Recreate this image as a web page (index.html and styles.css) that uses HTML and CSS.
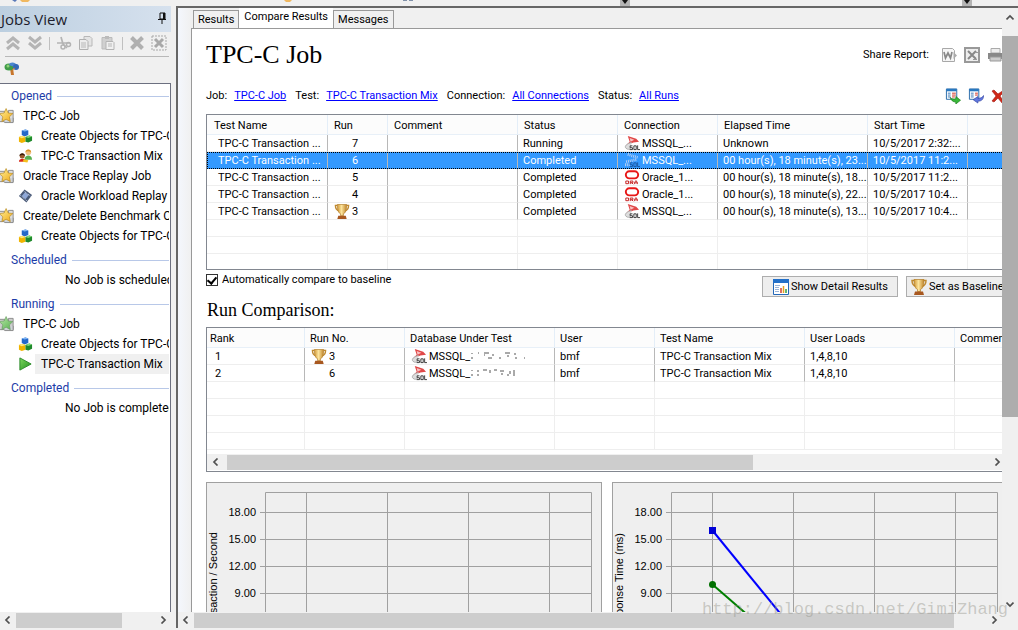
FILE: index.html
```html
<!DOCTYPE html>
<html lang="en">
<head>
<meta charset="utf-8">
<title>Jobs View</title>
<link rel="stylesheet" href="styles.css">
</head>
<body>
<svg class="defs" aria-hidden="true">
  <defs>
    <linearGradient id="gold" x1="0" y1="0" x2="1" y2="1"><stop offset="0" stop-color="#fff2a0"/><stop offset="1" stop-color="#f0a810"/></linearGradient>
    <linearGradient id="lime" x1="0" y1="0" x2="1" y2="1"><stop offset="0" stop-color="#b8e8a8"/><stop offset="1" stop-color="#58b050"/></linearGradient>
    <linearGradient id="play" x1="0" y1="0" x2="1" y2="1"><stop offset="0" stop-color="#7fd860"/><stop offset="1" stop-color="#1f8f1c"/></linearGradient>
    <linearGradient id="cup" x1="0" y1="0" x2="1" y2="0"><stop offset="0" stop-color="#d09838"/><stop offset=".45" stop-color="#fce49c"/><stop offset="1" stop-color="#c08428"/></linearGradient>
  </defs>
  <symbol id="i-star" viewBox="0 0 16 16"><path d="M-2 3h7v11h-7zM9 2h5v12H9z" fill="#ddd" stroke="#8a8a8a"/><path d="M2 11l3 4h9v-5" fill="#cfd3d8" stroke="#888"/><path d="M6.500 0l2.200 4.800 5 .6-3.700 3.500 1 5.100-4.500-2.600L2 14l1-5.100L-.7 5.400l5-.6z" fill="url(#gold)" stroke="#b98a20" stroke-width=".7"/></symbol>
  <symbol id="i-star-run" viewBox="0 0 16 16"><path d="M-2 3h7v11h-7zM9 2h5v12H9z" fill="#ccc" stroke="#8a8a8a"/><path d="M2 11l3 4h9v-5" fill="#cfd3d8" stroke="#888"/><path d="M6.500 0l2.200 4.800 5 .6-3.700 3.500 1 5.100-4.500-2.600L2 14l1-5.100L-.7 5.400l5-.6z" fill="url(#lime)" stroke="#6d9a68" stroke-width=".7"/></symbol>
  <symbol id="i-cubes" viewBox="0 0 16 16"><path d="M4 2l4-1 3 1v5L7 8.500 4 7z" fill="#2468c8"/><path d="M4 2l4-1 3 1-4 1.200z" fill="#7db4f4"/><path d="M1 9l3-1 4 1v5l-4 1.500L1 14z" fill="#f0b400"/><path d="M1 9l3-1 4 1-4 1.300z" fill="#ffe878"/><path d="M8 9l4-1.500 3 1V13l-4 2-3-1z" fill="#1f8a2c"/><path d="M8 9l4-1.500 3 1-4 1.500z" fill="#7fd87a"/></symbol>
  <symbol id="i-users" viewBox="0 0 16 16"><circle cx="11" cy="4" r="3" fill="#f0c080"/><path d="M8 4c0-4 6-4 6 0-2-1-4-2-6 0z" fill="#d89020"/><path d="M7 12c0-6 8-6 8 0z" fill="#58b050"/><circle cx="4.500" cy="8" r="2.700" fill="#9a5c2c"/><path d="M1.500 8c0-4 6-4 6 0-2-2-4-1-6 0z" fill="#3a1c08"/><path d="M1 14c0-4 7-4 8 0z" fill="#d82818"/><path d="M6 11.500l5 1-1 2.500-5-1z" fill="#f4c020"/></symbol>
  <symbol id="i-film" viewBox="0 0 16 16"><path d="M7 1l8 6-6 8-8-7z" fill="#4a5a78"/><path d="M7.500 4l4 3-3.500 4.500-4-3.500z" fill="#8fa8d8"/><path d="M6 2.500l7.500 5.800M2.500 7.200l7 6" stroke="#dde4f0" stroke-dasharray="1 1"/></symbol>
  <symbol id="i-play" viewBox="0 0 16 16"><path d="M2 1.500l12 6.500-12 6.500z" fill="url(#play)" stroke="#2a8a28"/></symbol>
  <symbol id="i-tree" viewBox="0 0 16 16"><path d="M6 7h3l1 7H7z" fill="#c8762c"/><ellipse cx="5" cy="6" rx="4.500" ry="3.500" fill="#3f9c48"/><circle cx="4" cy="5" r="1.500" fill="#8fd078"/><path d="M5 4c1-4 7-3 10 2-3-1-7 0-10-2z" fill="#4a86d0"/><circle cx="12" cy="6" r="3" fill="#3468b8"/><path d="M8 9l3-2" stroke="#c8762c"/></symbol>
  <symbol id="i-up" viewBox="0 0 16 16"><path d="M2 8l6-5 6 5M2 14l6-5 6 5" fill="none" stroke="#b4b4b4" stroke-width="3"/></symbol>
  <symbol id="i-down" viewBox="0 0 16 16"><path d="M2 2l6 5 6-5M2 8l6 5 6-5" fill="none" stroke="#b4b4b4" stroke-width="3"/></symbol>
  <symbol id="i-cut" viewBox="0 0 16 16"><path d="M5 2l2 7M1 8h13M7 9l4 4" stroke="#b4b4b4" stroke-width="1.700"/><circle cx="7" cy="12" r="2" fill="none" stroke="#b4b4b4" stroke-width="1.500"/><circle cx="12.500" cy="9.500" r="2" fill="none" stroke="#b4b4b4" stroke-width="1.500"/></symbol>
  <symbol id="i-copy" viewBox="0 0 16 16"><path d="M6 1.500h6l2 2V11H6z" fill="#e4e4e4" stroke="#b8b8b8"/><path d="M1.500 4.500H8l2 2v8H1.500z" fill="#ececec" stroke="#b0b0b0"/><path d="M3 8h5M3 10h5M3 12h5" stroke="#b8b8b8"/></symbol>
  <symbol id="i-paste" viewBox="0 0 16 16"><path d="M2 2.500h10V14H2z" fill="#d0d0d0" stroke="#bbb"/><path d="M5 1h4v3H5z" fill="#bbb"/><path d="M6 6.500h7l1 1v7H6z" fill="#f0f0f0" stroke="#b4b4b4"/><path d="M8 9h4M8 11h4" stroke="#b8b8b8"/></symbol>
  <symbol id="i-x" viewBox="0 0 16 16"><path d="M2.500 2.500l11 11M13.500 2.500l-11 11" stroke="#b0b0b0" stroke-width="4"/></symbol>
  <symbol id="i-xbox" viewBox="0 0 16 16"><rect x="1" y="1" width="14" height="14" fill="none" stroke="#a8a8a8" stroke-dasharray="2 1"/><path d="M4 4l8 8M12 4l-8 8" stroke="#a8a8a8" stroke-width="3"/></symbol>
  <symbol id="i-pin" viewBox="0 0 10 12"><path d="M3 1h5v6H3zM1 7.500h8M5 8v4" fill="none" stroke="#111"/><path d="M6 1h2v6H6z" fill="#111"/></symbol>
  <symbol id="i-cup" viewBox="0 0 16 16"><path d="M3 1.500H1c0 3 1 5 4 6M13 1.500h2c0 3-1 5-4 6" fill="none" stroke="#c08a30" stroke-width="1.500"/><path d="M3 .5h10c0 5-1 9-3.500 10v2h-3v-2C4 9.500 3 5.500 3 .5z" fill="url(#cup)" stroke="#b07820" stroke-width=".7"/><path d="M4 12.500h8l1 3.500H3z" fill="#a85820"/></symbol>
  <symbol id="i-sql" viewBox="0 0 17 16"><path d="M4 0l9 3 3 3-6 1-8 3 4-4z" fill="#e04848"/><path d="M6 2l5 2-4 2z" fill="#f8c0c0"/><path d="M8 7c-5 1-8 4-6 6s4 1 5 0" fill="#ddd" stroke="#aaa"/><path d="M9 10.500H6.500v2H9v2H6M10.500 10.500h2.500v4h-2.500zM14.500 10v4.500H17" fill="none" stroke="#333"/></symbol>
  <symbol id="i-sql-sel" viewBox="0 0 17 16"><path d="M4 1.500l11 3.500M13 7L2 9.500M1 12.500h6" fill="none" stroke="#b8d0f4" stroke-width="3" stroke-dasharray="1 1"/><path d="M9 10.500H6.500v2H9v2H6M10.500 10.500h2.500v4h-2.500zM14.500 10v4.500H17" fill="none" stroke="#1b56a0"/></symbol>
  <symbol id="i-ora" viewBox="0 0 17 17"><rect x="1.500" y="1.500" width="14" height="8" rx="4" fill="#fff" stroke="#e81818" stroke-width="2.200"/><path d="M1.500 12.500h3v3h-3zM6.500 16v-3.500h3v2h-3M8 14.500l2 1.500M11.500 16v-2l1.500-2 1.500 2v2M11.500 14.500h3" fill="none" stroke="#c01010"/></symbol>
  <symbol id="i-word" viewBox="0 0 16 16"><path d="M1.500 1.500h10l2 2v11h-12z" fill="#f6f6f6" stroke="#a8a8a8"/><path d="M3 5l1.500 6L7 6l2.500 5L11 5" fill="none" stroke="#888" stroke-width="1.700"/><path d="M12.500 5l3.500 3.500-3.500 3.500z" fill="#aaa"/></symbol>
  <symbol id="i-excel" viewBox="0 0 16 16"><path d="M1 1h14v14H1z" fill="#eee" stroke="#999" stroke-width="2"/><path d="M4 4l8 8M12 4l-8 8" stroke="#888" stroke-width="2"/><path d="M9 12.500h4M11 5.500h3" stroke="#999"/></symbol>
  <symbol id="i-print" viewBox="0 0 16 16"><path d="M4 1.500h9V6H4z" fill="#eee" stroke="#aaa"/><path d="M1 6h15v6H1z" fill="#888"/><path d="M3 10h11v4H3z" fill="#ccc" stroke="#999"/></symbol>
  <symbol id="i-sheet-out" viewBox="0 0 16 17"><path d="M1 1h11v11H1z" fill="#fff" stroke="#2468a8"/><path d="M1 1h11v2.500H1z" fill="#2878c0"/><path d="M2.500 5.500h3M2.500 7.500h3M2.500 9.500h3" stroke="#3878b8"/><path d="M7 5.500h4M7 7.500h4M7 9.500h3" stroke="#d03020"/><path d="M5 10c2 2 4 2 6 1.500V9l5 4-5 4v-2c-3 0-5-2-6-5z" fill="#38b838" stroke="#187818" stroke-width=".7"/></symbol>
  <symbol id="i-sheet-in" viewBox="0 0 16 17"><path d="M1 1h10v11H1z" fill="#fff" stroke="#2468a8"/><path d="M1 1h10v2.500H1z" fill="#2878c0"/><path d="M2.500 5.500h3M2.500 7.500h3M2.500 9.500h3" stroke="#3878b8"/><path d="M7 5.500h3M7 7.500h3" stroke="#d03020"/><path d="M16 8c0 5-3 6-6 6v2l-5-3.500 5-3.500v2c3 0 5-1 6-3z" fill="#6078e0" stroke="#3040a0" stroke-width=".7"/></symbol>
  <symbol id="i-del" viewBox="0 0 16 16"><path d="M3 2l4 4 6-4 1 1-5 5 4 6-2 1-4-5-4 4-2-1 4-5-4-5z" fill="#d02818" stroke="#a01810" stroke-width=".6"/></symbol>
  <symbol id="i-report" viewBox="0 0 16 16"><path d="M.5.5h15v15H.5z" fill="#fff" stroke="#2468b8"/><path d="M0 0h16v4H0z" fill="#2470c8"/><path d="M2 6.500h5M2 8.500h4M2 10.500h4M2 12.500h4" stroke="#9ab4d8"/><path d="M8 9v5" stroke="#d04030" stroke-width="1.500"/><path d="M10.500 7v7" stroke="#e8a020" stroke-width="1.500"/><path d="M13 10v4" stroke="#30a040" stroke-width="1.500"/></symbol>
  <symbol id="a-left" viewBox="0 0 8 8"><path d="M5.500.5L2 4l3.500 3.500" fill="none" stroke="#505050" stroke-width="1.700"/></symbol>
  <symbol id="a-right" viewBox="0 0 8 8"><path d="M2.500.5L6 4 2.500 7.500" fill="none" stroke="#505050" stroke-width="1.700"/></symbol>
  <symbol id="a-up" viewBox="0 0 8 8"><path d="M.5 5.500L4 2l3.500 3.500" fill="none" stroke="#505050" stroke-width="1.700"/></symbol>
  <symbol id="a-down" viewBox="0 0 8 8"><path d="M.5 2.500L4 6l3.500-3.500" fill="none" stroke="#505050" stroke-width="1.700"/></symbol>
  <symbol id="grid" viewBox="0 0 396 200">
    <path d="M59.500 200V10.500h326V200M100.500 10.500V200M181.500 10.500V200M262.500 10.500V200M343.500 10.500V200M54 30.500h331M54 57.500h331M54 84.500h331M54 111.500h331M54 138.500h331" fill="none" stroke="#a0a0a0"/>
  </symbol>
</svg>

<div class="strip">
  <svg viewBox="0 0 420 6" width="420" height="6" aria-hidden="true"><path d="M12 0h5l-2 2z" fill="#5878b8"/><path d="M20 0h10l-2 2h-6z" fill="#f0b860"/><path d="M284 0h8l-2 2h-4z" fill="#f0b860"/><path d="M403 0h4v1h-4zM409 0h4v1h-4z" fill="#8090a8"/></svg>
  <svg class="drop drop-mid" viewBox="0 0 10 6" aria-hidden="true"><path d="M0 0h10v6H0z" fill="#b4b4b4"/><path d="M2 0h6L5 4z" fill="#111"/></svg>
  <svg class="drop drop-end" viewBox="0 0 10 6" aria-hidden="true"><path d="M0 0h10v6H0z" fill="#b4b4b4"/><path d="M2 0h6L5 4z" fill="#111"/></svg>
</div>

<div class="window">
  <aside class="sidebar">
    <header class="side-title"><h2>Jobs View</h2><svg width="10" height="12"><use href="#i-pin"/></svg></header>
    <div class="toolbar">
      <button aria-label="Collapse"><svg><use href="#i-up"/></svg></button>
      <button aria-label="Expand"><svg><use href="#i-down"/></svg></button>
      <i></i>
      <button aria-label="Cut"><svg><use href="#i-cut"/></svg></button>
      <button aria-label="Copy"><svg><use href="#i-copy"/></svg></button>
      <button aria-label="Paste"><svg><use href="#i-paste"/></svg></button>
      <i></i>
      <button aria-label="Delete"><svg><use href="#i-x"/></svg></button>
      <button aria-label="Delete all"><svg><use href="#i-xbox"/></svg></button>
    </div>
    <div class="toolbar second"><button aria-label="Tree"><svg><use href="#i-tree"/></svg></button></div>
    <div class="tree">
      <h3>Opened</h3>
      <ul>
        <li><svg><use href="#i-star"/></svg><span>TPC-C Job</span></li>
        <li class="sub"><svg><use href="#i-cubes"/></svg><span>Create Objects for TPC-C</span></li>
        <li class="sub"><svg><use href="#i-users"/></svg><span>TPC-C Transaction Mix</span></li>
        <li><svg><use href="#i-star"/></svg><span>Oracle Trace Replay Job</span></li>
        <li class="sub"><svg><use href="#i-film"/></svg><span>Oracle Workload Replay</span></li>
        <li><svg><use href="#i-star"/></svg><span>Create/Delete Benchmark O</span></li>
        <li class="sub"><svg><use href="#i-cubes"/></svg><span>Create Objects for TPC-C</span></li>
      </ul>
      <h3>Scheduled</h3>
      <p>No Job is scheduled</p>
      <h3>Running</h3>
      <ul>
        <li><svg><use href="#i-star-run"/></svg><span>TPC-C Job</span></li>
        <li class="sub"><svg><use href="#i-cubes"/></svg><span>Create Objects for TPC-C</span></li>
        <li class="sub active"><svg><use href="#i-play"/></svg><span>TPC-C Transaction Mix</span></li>
      </ul>
      <h3>Completed</h3>
      <p>No Job is completed</p>
    </div>
    <div class="hbar"><svg><use href="#a-left"/></svg><div class="track"><b class="thumb-side"></b></div><svg><use href="#a-right"/></svg></div>
  </aside>

  <main class="pane">
    <div class="view">
      <nav class="tabs">
        <button>Results</button><button class="current">Compare Results</button><button>Messages</button>
      </nav>
      <div class="page">
        <div class="report">
          <header class="report-head">
            <h1>TPC-C Job</h1>
            <div class="share"><span>Share Report:</span>
              <button aria-label="Word"><svg><use href="#i-word"/></svg></button>
              <button aria-label="Excel"><svg><use href="#i-excel"/></svg></button>
              <button aria-label="Print"><svg><use href="#i-print"/></svg></button>
            </div>
          </header>
          <div class="filters">
            <span>Job:</span><a href="#">TPC-C Job</a>
            <span>Test:</span><a href="#">TPC-C Transaction Mix</a>
            <span>Connection:</span><a href="#">All Connections</a>
            <span>Status:</span><a href="#">All Runs</a>
            <div class="actions">
              <button aria-label="Export"><svg><use href="#i-sheet-out"/></svg></button>
              <button aria-label="Import"><svg><use href="#i-sheet-in"/></svg></button>
              <button aria-label="Remove"><svg><use href="#i-del"/></svg></button>
            </div>
          </div>

          <div class="list runs">
            <table>
              <colgroup><col class="w120"><col class="w60"><col class="w130"><col class="w100"><col class="w100"><col class="w150"><col class="w100"><col></colgroup>
              <thead><tr><th>Test Name</th><th>Run</th><th>Comment</th><th>Status</th><th>Connection</th><th>Elapsed Time</th><th>Start Time</th><th></th></tr></thead>
              <tbody>
                <tr><td class="indent">TPC-C Transaction ...</td><td><span class="ic"></span>7</td><td></td><td>Running</td><td><svg class="ic"><use href="#i-sql"/></svg>MSSQL_...</td><td>Unknown</td><td>10/5/2017 2:32:...</td><td></td></tr>
                <tr class="selected"><td class="indent">TPC-C Transaction ...</td><td><span class="ic"></span>6</td><td></td><td>Completed</td><td><svg class="ic"><use href="#i-sql-sel"/></svg>MSSQL_...</td><td>00 hour(s), 18 minute(s), 23...</td><td>10/5/2017 11:2...</td><td></td></tr>
                <tr><td class="indent">TPC-C Transaction ...</td><td><span class="ic"></span>5</td><td></td><td>Completed</td><td><svg class="ic"><use href="#i-ora"/></svg>Oracle_1...</td><td>00 hour(s), 18 minute(s), 18...</td><td>10/5/2017 11:2...</td><td></td></tr>
                <tr><td class="indent">TPC-C Transaction ...</td><td><span class="ic"></span>4</td><td></td><td>Completed</td><td><svg class="ic"><use href="#i-ora"/></svg>Oracle_1...</td><td>00 hour(s), 18 minute(s), 22...</td><td>10/5/2017 10:4...</td><td></td></tr>
                <tr><td class="indent">TPC-C Transaction ...</td><td><svg class="ic"><use href="#i-cup"/></svg>3</td><td></td><td>Completed</td><td><svg class="ic"><use href="#i-sql"/></svg>MSSQL_...</td><td>00 hour(s), 18 minute(s), 13...</td><td>10/5/2017 10:4...</td><td></td></tr>
                <tr class="empty"><td></td><td></td><td></td><td></td><td></td><td></td><td></td><td></td></tr>
                <tr class="empty"><td></td><td></td><td></td><td></td><td></td><td></td><td></td><td></td></tr>
                <tr class="empty"><td></td><td></td><td></td><td></td><td></td><td></td><td></td><td></td></tr>
              </tbody>
            </table>
          </div>

          <div class="options">
            <label><input type="checkbox" checked>Automatically compare to baseline</label>
            <div class="buttons">
              <button class="detail"><svg><use href="#i-report"/></svg>Show Detail Results</button>
              <button class="baseline"><svg><use href="#i-cup"/></svg>Set as Baseline</button>
            </div>
          </div>

          <h2>Run Comparison:</h2>

          <div class="list compare">
            <table>
              <colgroup><col class="w98"><col class="w100"><col class="w150"><col class="w100"><col class="w150"><col class="w150"><col></colgroup>
              <thead><tr><th>Rank</th><th>Run No.</th><th>Database Under Test</th><th>User</th><th>Test Name</th><th>User Loads</th><th>Commen</th></tr></thead>
              <tbody>
                <tr><td class="rank">1</td><td><svg class="ic"><use href="#i-cup"/></svg>3</td><td><svg class="ic"><use href="#i-sql"/></svg>MSSQL_<svg class="smudge" viewBox="0 0 58 10"><path d="M2 2v1M2 6v2M8 2h1M14 2h5M14 4h1M18 7h4M23 3v2M29 7h2M35 2h5M38 4v2M45 2v2M46 6v2M54 7h1" stroke="#555"/></svg></td><td>bmf</td><td>TPC-C Transaction Mix</td><td>1,4,8,10</td><td></td></tr>
                <tr><td class="rank">2</td><td><span class="ic"></span>6</td><td><svg class="ic"><use href="#i-sql"/></svg>MSSQL_<svg class="smudge" viewBox="0 0 58 10"><path d="M2 2v1M2 6v2M7 3h2M8 6v2M13 2h4M20 2v3M24 2h3M30 3h4M31 6h2M37 7h2M40 3v3M44 2v6" stroke="#555"/></svg></td><td>bmf</td><td>TPC-C Transaction Mix</td><td>1,4,8,10</td><td></td></tr>
                <tr class="empty"><td></td><td></td><td></td><td></td><td></td><td></td><td></td></tr>
                <tr class="empty"><td></td><td></td><td></td><td></td><td></td><td></td><td></td></tr>
                <tr class="empty"><td></td><td></td><td></td><td></td><td></td><td></td><td></td></tr>
                <tr class="empty"><td></td><td></td><td></td><td></td><td></td><td></td><td></td></tr>
              </tbody>
            </table>
            <div class="hbar"><svg><use href="#a-left"/></svg><div class="track"><b class="thumb-list"></b></div><svg><use href="#a-right"/></svg></div>
          </div>

          <div class="charts">
            <svg class="chart" viewBox="0 0 396 200">
              <rect x=".5" y=".5" width="395" height="220" fill="#efefef" stroke="#a0a0a0"/>
              <use href="#grid" width="396" height="200"/>
              <g text-anchor="end"><text x="50" y="34">18.00</text><text x="50" y="61">15.00</text><text x="50" y="88">12.00</text><text x="50" y="115">9.00</text></g>
              <text text-anchor="end" transform="translate(11 50) rotate(-90)">Transaction / Second</text>
            </svg>
            <svg class="chart" viewBox="0 0 396 200">
              <rect x=".5" y=".5" width="395" height="220" fill="#efefef" stroke="#a0a0a0"/>
              <use href="#grid" width="396" height="200"/>
              <path d="M100.500 48.500L176 141" stroke="#0000ff" stroke-width="2"/><path d="M97 45h7v7h-7z" fill="#0000d8"/>
              <path d="M100.500 102.500L146 142" stroke="#008000" stroke-width="2"/><circle cx="100.500" cy="102.500" r="3.500" fill="#007000"/>
              <g text-anchor="end"><text x="50" y="34">18.00</text><text x="50" y="61">15.00</text><text x="50" y="88">12.00</text><text x="50" y="115">9.00</text></g>
              <text text-anchor="end" transform="translate(11 51) rotate(-90)">Response Time (ms)</text>
            </svg>
          </div>
        </div>
      </div>
    </div>
    <div class="vbar"><svg><use href="#a-up"/></svg><div class="vtrack"><b></b></div><svg><use href="#a-down"/></svg></div>
    <div class="hbar"><svg><use href="#a-left"/></svg><div class="track"><b class="thumb-main"></b></div><svg><use href="#a-right"/></svg></div>
  </main>
</div>
<div class="watermark">http://blog.csdn.net/GimiZhang</div>
</body>
</html>
```

FILE: styles.css
```css
* { box-sizing: border-box; }
body {
  margin: 0;
  height: 100vh;
  overflow: hidden;
  display: flex;
  flex-direction: column;
  background: #f0f0f0;
  color: #000;
  font: 11px/16px Roboto, "Liberation Sans", sans-serif;
}
h1, h2, h3, p, ul { margin: 0; padding: 0; font-weight: normal; }
button { font: inherit; color: inherit; border: 0; background: none; padding: 0; white-space: nowrap; }
svg { flex: none; display: block; }
.defs { position: absolute; width: 0; height: 0; }

/* bottom edge of the application toolbar */
.strip { flex: none; height: 6px; display: flex; align-items: flex-start; background: #f0f0f0; }
.drop { height: 6px; width: 10px; }
.drop-mid { margin-left: 200px; }
.drop-end { margin-left: auto; margin-right: 46px; }

.window { flex: 1; min-height: 0; display: flex; gap: 5px; padding-bottom: 2px; }

/* jobs sidebar */
.sidebar { width: 171px; flex: none; display: flex; flex-direction: column; font: 12px/20px Roboto, sans-serif; }
.side-title { display: flex; align-items: center; justify-content: space-between; height: 26px; padding: 0 4px 0 1px; background: linear-gradient(90deg, #bccfe0, #d6e1ee); }
.side-title h2 { font: 15px/24px "Open Sans", sans-serif; color: #1c1c2c; }
.side-title svg { margin-bottom: 2px; }
.toolbar { display: flex; align-items: center; height: 25px; margin: 0 2px 0 5px; padding-bottom: 2px; gap: 6px; border-bottom: 1px solid #b8b8b8; }
.toolbar svg { width: 16px; height: 16px; }
.toolbar i { width: 1px; height: 13px; background: #c0c0c0; }
.toolbar.second { height: 26px; border: 0; margin-left: 4px; }
.tree { flex: 1; min-height: 0; overflow: hidden; background: #fff; border-top: 1px solid #6c7080; border-right: 1px solid #6c7080; }
.tree h3 { display: flex; align-items: center; gap: 5px; height: 24px; padding: 4px 1px 0 11px; font-size: 12px; color: #1c3ca8; }
.tree h3:first-child { height: 22px; padding-top: 2px; }
.tree h3::after { content: ""; flex: 1; height: 1px; background: #b8c8e8; }
.tree ul { list-style: none; margin-right: 1px; overflow: hidden; }
.tree li { display: flex; align-items: center; height: 20px; white-space: nowrap; }
.tree li svg { width: 15px; height: 16px; }
.tree li span { flex: 1; padding-left: 8px; }
.tree .sub { padding-left: 18px; }
.tree .sub span { margin-left: 2px; padding-left: 6px; }
.tree .active span { background: #f0f0f0; }
.tree p { height: 20px; padding-left: 65px; margin-right: 1px; white-space: nowrap; overflow: hidden; }

/* scroll bars */
.hbar { flex: none; display: flex; align-items: center; height: 16px; background: #f0f0f0; }
.hbar svg, .vbar svg { width: 8px; height: 8px; margin: 4px; }
.track { flex: 1; height: 15px; }
.track b { display: block; height: 100%; background: #cdcdcd; }
.thumb-side { width: 76%; }
.thumb-main { width: 96%; }
.thumb-list { width: 69%; }
.vbar { display: flex; flex-direction: column; align-items: center; background: #f0f0f0; padding-top: 2px; }
.vtrack { flex: 1; width: 100%; padding-top: 10px; }
.vtrack b { display: block; height: 68%; background: #adadad; }

/* report pane */
.pane { flex: 1; min-width: 0; display: grid; grid-template: minmax(0, 1fr) 16px / minmax(0, 1fr) 16px; border-left: 2px solid #666; border-top: 2px solid #666; }
.view { min-height: 0; overflow: hidden; display: flex; flex-direction: column; padding-left: 13px; background: linear-gradient(90deg, #f4f7fd 0, #f0f0f0 13px); }
.tabs { display: flex; align-items: flex-end; height: 20px; padding-left: 2px; }
.tabs button { height: 18px; padding: 0 4px; border: 1px solid #999; border-bottom: 0; background: #f0f0f0; }
.tabs .current { height: 20px; padding: 0 5px 2px; border: 0; background: #fff; }
.page { flex: 1; min-height: 0; overflow: hidden; background: #fff; border-left: 1px solid #999; border-top: 1px solid #999; padding-left: 14px; }
.report { margin-right: -5px; }
.report-head { display: flex; align-items: center; justify-content: space-between; height: 51px; }
.report-head h1 { padding-top: 1px; font: 26px/30px "Liberation Serif", serif; }
.share { display: flex; align-items: center; gap: 7px; padding-right: 4px; }
.share span { margin-right: 5px; }
.share svg, .actions svg { width: 16px; height: 16px; }
.filters { display: flex; align-items: center; height: 32px; margin-bottom: 2px; }
.filters a { color: #00f; margin: 0 9px 0 7px; }
.actions { display: flex; gap: 7px; margin-left: auto; }

.list { border: 1px solid #828790; background: #fff; overflow: hidden; }
.runs { height: 156px; }
table { width: 100%; table-layout: fixed; border-collapse: separate; border-spacing: 0; }
th, td { padding: 0 0 0 5px; text-align: left; font-weight: normal; white-space: nowrap; overflow: hidden; border-right: 1px solid #e4eef8; }
th { height: 20px; padding-top: 2px; padding-left: 6px; background: #fcfcfc; border-bottom: 1px solid #e8f0f8; }
th:first-child { padding-left: 7px; }
td { height: 17px; padding-top: 1px; line-height: 15px; border-right-color: #b8b8b8; border-bottom: 1px solid #eee; }
td > svg, td > span { display: inline-block; vertical-align: top; }
.empty td { border-right-color: #eee; }
.indent { padding-left: 11px; }
.ic { width: 18px; height: 15px; margin: 0 1px 0 0; }
.selected td { background: #39f; color: #fff; border-bottom-color: #39f; }
.selected { outline: 1px dotted #000; outline-offset: -1px; }
.w60 { width: 60px; }
.w98 { width: 98px; }
.w100 { width: 100px; }
.w120 { width: 121px; }
.w130 { width: 130px; }
.w150 { width: 150px; }

.options { display: flex; justify-content: space-between; align-items: flex-start; height: 28px; }
.options label { display: flex; align-items: center; gap: 4px; height: 20px; }
.options input { appearance: none; width: 12px; height: 12px; margin: 0; border: 1px solid #333; background: #fff; display: grid; place-items: center; }
.options input:checked::after { content: ""; width: 4px; height: 7px; border: solid #000; border-width: 0 2px 2px 0; rotate: 40deg; margin-bottom: 2px; }
.buttons { display: flex; gap: 8px; padding-top: 6px; }
.buttons button { display: flex; align-items: center; gap: 2px; height: 21px; padding: 0 10px; border: 1px solid #adadad; background: #eee; }
.buttons svg { width: 16px; height: 16px; }
.buttons .detail { width: 136px; }
.buttons .baseline { width: 101px; padding: 0 4px; }

.report h2 { height: 29px; padding-left: 1px; font: 18px/24px "Liberation Serif", serif; }
.compare th { padding-left: 5px; }
.compare th:first-child { padding-left: 3px; }
.rank { padding-left: 8px; }
.smudge { width: 58px; height: 14px; }
.compare .hbar { margin: 4px 0 1px; }
.compare .hbar svg:first-child { margin: 4px 7px 4px 5px; }
.compare .hbar svg:last-child { margin-right: 5px; }

.charts { display: flex; gap: 10px; margin-top: 10px; }
.chart { width: 396px; height: 200px; font: 11px "Liberation Sans", sans-serif; }

.watermark { position: absolute; right: 10px; bottom: 10px; font: 17px/20px "Liberation Mono", monospace; color: rgba(150, 150, 140, 0.45); }
```
